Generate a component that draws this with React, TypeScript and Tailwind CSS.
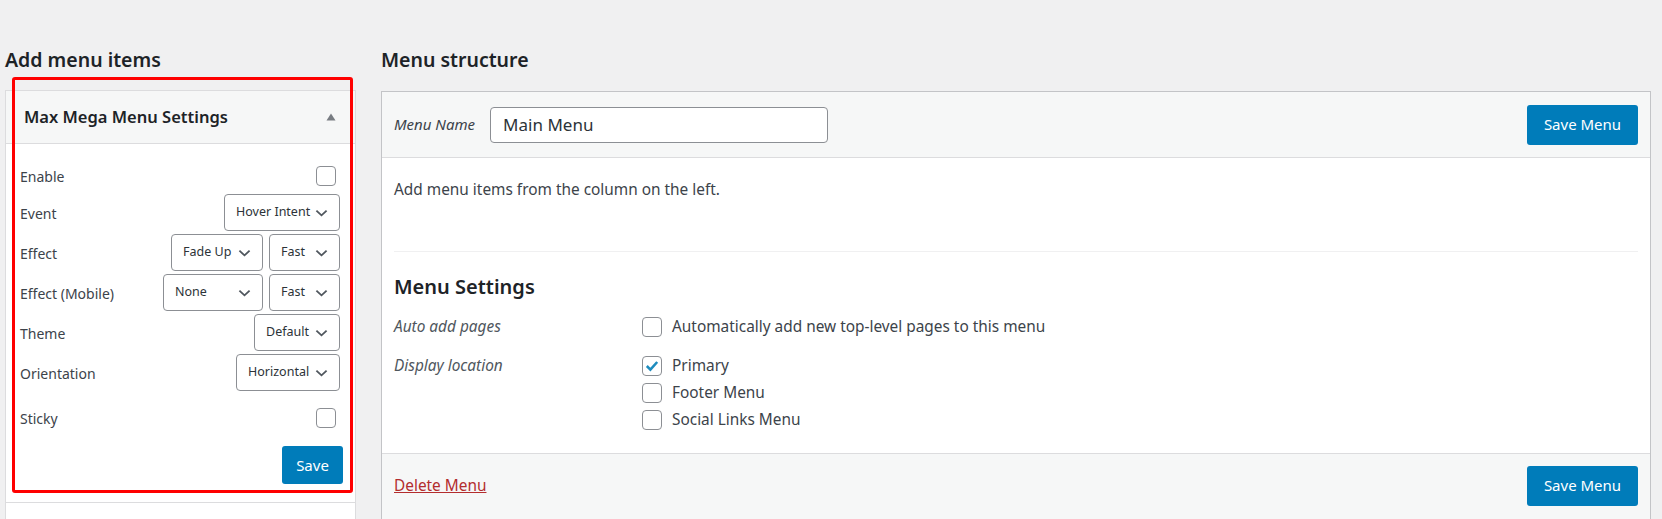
import React from "react";

const FONT = { fontFamily: '"Noto Sans", "Open Sans", Arial, sans-serif' };

function Chevron() {
  return (
    <svg width="13" height="8" viewBox="0 0 14 8" className="shrink-0">
      <polyline points="1.5,1.5 7,6.5 12.5,1.5" fill="none" stroke="#50575e" strokeWidth="2" />
    </svg>
  );
}

function Select({ value, width }: { value: string; width: string }) {
  return (
    <div
      className={`${width} h-[37px] flex items-center justify-between pl-[11px] pr-[11px] border border-[#8c8f94] rounded-[4px] bg-white text-[12.5px] text-[#2c3338]`}
    >
      <span className="whitespace-nowrap">{value}</span>
      <Chevron />
    </div>
  );
}

function Checkbox({ checked = false }: { checked?: boolean }) {
  return (
    <div className="w-[20px] h-[20px] border border-[#8c8f94] rounded-[4px] bg-white flex items-center justify-center shrink-0">
      {checked && (
        <svg width="16" height="16" viewBox="0 0 20 20">
          <path d="M3.5 10 L8 14.5 L16.5 5" fill="none" stroke="#1e8cbe" strokeWidth="3.2" strokeLinejoin="miter" />
        </svg>
      )}
    </div>
  );
}

function Row({ label, h, children }: { label: string; h: string; children: React.ReactNode }) {
  return (
    <div className={`${h} flex items-center justify-between`}>
      <span className="text-[14px] text-[#3c434a]">{label}</span>
      <div className="flex items-center gap-[6px]">{children}</div>
    </div>
  );
}

function SelRow({ label, children }: { label: string; children: React.ReactNode }) {
  return (
    <div className="h-[40px] flex justify-between">
      <span className="text-[14px] text-[#3c434a] self-center">{label}</span>
      <div className="flex gap-[6px] pt-[1px]">{children}</div>
    </div>
  );
}

function BlueButton({ children, cls }: { children: React.ReactNode; cls: string }) {
  return (
    <div className={`${cls} bg-[#007cba] text-white rounded-[3px] flex items-center justify-center text-[15px]`}>
      {children}
    </div>
  );
}

export default function App() {
  return (
    <div className="relative w-[1662px] h-[519px] overflow-hidden bg-[#f0f0f1]" style={FONT}>
      <div className="flex pl-[5px]">
        {/* Left column */}
        <div className="w-[351px] shrink-0">
          <h2 className="pt-[46px] h-[90px] text-[19.5px] leading-[28px] font-semibold text-[#1d2327]">Add menu items</h2>
          <div className="border border-[#dcdcde] bg-white">
            <div className="h-[53px] bg-[#f6f7f7] border-b border-[#dcdcde] flex items-center justify-between pl-[18px] pr-[19px]">
              <span className="text-[16.5px] font-semibold text-[#1d2327]">Max Mega Menu Settings</span>
              <svg width="10" height="8" viewBox="0 0 10 8">
                <polygon points="5,0.5 9.5,7.5 0.5,7.5" fill="#787c82" />
              </svg>
            </div>
            <div className="pl-[14px] pr-[15px] pt-[15px] pb-[18px]">
              <Row label="Enable" h="h-[34px]">
                <div className="mr-[4px]"><Checkbox /></div>
              </Row>
              <SelRow label="Event">
                <Select value="Hover Intent" width="w-[116px]" />
              </SelRow>
              <SelRow label="Effect">
                <Select value="Fade Up" width="w-[92px]" />
                <Select value="Fast" width="w-[71px]" />
              </SelRow>
              <SelRow label="Effect (Mobile)">
                <Select value="None" width="w-[100px]" />
                <Select value="Fast" width="w-[71px]" />
              </SelRow>
              <SelRow label="Theme">
                <Select value="Default" width="w-[86px]" />
              </SelRow>
              <SelRow label="Orientation">
                <Select value="Horizontal" width="w-[104px]" />
              </SelRow>
              <Row label="Sticky" h="h-[50px]">
                <div className="mr-[4px]"><Checkbox /></div>
              </Row>
              <div className="flex justify-end pt-[3px] -mr-[3px]">
                <BlueButton cls="w-[61px] h-[38px]">Save</BlueButton>
              </div>
            </div>
            <div className="border-t border-[#dcdcde] h-[40px] bg-white" />
          </div>
        </div>

        {/* Right column */}
        <div className="ml-[25px] w-[1270px] shrink-0">
          <h2 className="pt-[46px] h-[91px] text-[19.5px] leading-[28px] font-semibold text-[#1d2327]">Menu structure</h2>
          <div className="border border-[#c3c4c7]">
            <div className="h-[66px] bg-[#f6f7f7] border-b border-[#dcdcde] flex items-center justify-between px-[12px]">
              <div className="flex items-center">
                <span className="italic text-[15px] text-[#3c434a] mr-[15px]">Menu Name</span>
                <div className="w-[338px] h-[36px] border border-[#8c8f94] rounded-[4px] bg-white flex items-center pl-[12px] text-[17px] text-[#2c3338]">
                  Main Menu
                </div>
              </div>
              <BlueButton cls="w-[111px] h-[40px]">Save Menu</BlueButton>
            </div>
            <div className="bg-white px-[12px] pt-[21px] pb-[19px]">
              <p className="text-[15.4px] leading-[22.5px] text-[#3c434a]">Add menu items from the column on the left.</p>
              <div className="mt-[49px] h-[1px] bg-[#f0f0f1]" />
              <h3 className="mt-[21px] text-[20px] leading-[28px] font-semibold text-[#1d2327]">Menu Settings</h3>
              <div className="mt-[13px] flex">
                <div className="w-[248px] h-[26px] flex items-center italic text-[15.4px] text-[#50575e]">Auto add pages</div>
                <div className="h-[26px] flex items-center gap-[10px] text-[15.4px] text-[#3c434a]">
                  <Checkbox />
                  <span>Automatically add new top-level pages to this menu</span>
                </div>
              </div>
              <div className="mt-[13px] flex">
                <div className="w-[248px] h-[27px] flex items-center italic text-[15.4px] text-[#50575e]">Display location</div>
                <div className="flex flex-col text-[15.4px] text-[#3c434a]">
                  <div className="h-[27px] flex items-center gap-[10px]"><Checkbox checked /><span>Primary</span></div>
                  <div className="h-[27px] flex items-center gap-[10px]"><Checkbox /><span>Footer Menu</span></div>
                  <div className="h-[27px] flex items-center gap-[10px]"><Checkbox /><span>Social Links Menu</span></div>
                </div>
              </div>
            </div>
            <div className="bg-[#f6f7f7] border-t border-[#dcdcde] px-[12px] pt-[12px] h-[80px] flex justify-between items-start">
              <a className="mt-[8px] text-[15.4px] text-[#b32d2e] underline">Delete Menu</a>
              <BlueButton cls="w-[111px] h-[40px]">Save Menu</BlueButton>
            </div>
          </div>
        </div>
      </div>

      {/* highlight annotation */}
      <div className="absolute left-[12px] top-[77px] w-[341px] h-[416px] border-[3px] border-[#ff0000] rounded-[3px] pointer-events-none" />
    </div>
  );
}
